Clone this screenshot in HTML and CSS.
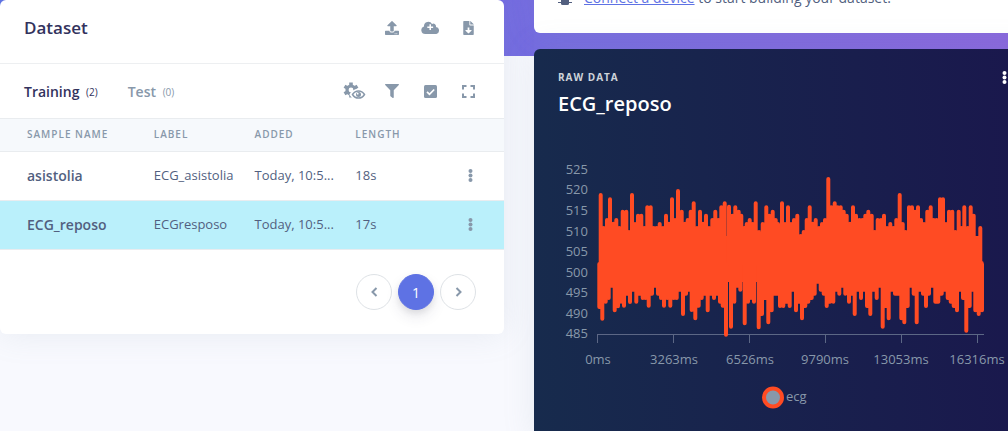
FILE: index.html
```html
<!DOCTYPE html>
<html lang="en">
<head>
<meta charset="utf-8">
<title>Dataset</title>
<link rel="stylesheet" href="styles.css">
</head>
<body>
<main class="page">
  <section class="card dataset">
    <header class="card-header">
      <h1 class="title">Dataset</h1>
      <div class="tools">
        <button class="tool" aria-label="Upload data"><svg width="14" height="14" viewBox="0 0 512 512"><path d="M296 384h-80c-13 0-24-11-24-24V192h-88c-18 0-27-21-14-34L242 6c8-8 20-8 28 0l152 152c13 13 4 34-14 34h-88v168c0 13-11 24-24 24zm216-8v112c0 13-11 24-24 24H24c-13 0-24-11-24-24V376c0-13 11-24 24-24h136v8c0 31 25 56 56 56h80c31 0 56-25 56-56v-8h136c13 0 24 11 24 24zm-124 88a20 20 0 1 0-40 0 20 20 0 0 0 40 0zm64 0a20 20 0 1 0-40 0 20 20 0 0 0 40 0z"/></svg></button>
        <button class="tool" aria-label="Import from cloud"><svg width="18" height="13" viewBox="0 0 640 480"><path fill-rule="evenodd" d="M538 225A96 96 0 0 0 395 114 160 160 0 0 0 96 192v8A144 144 0 0 0 144 480H512a128 128 0 0 0 26-255zM300 120h56v80h80v56h-80v80h-56v-80h-80v-56h80z"/></svg></button>
        <button class="tool" aria-label="Export data"><svg width="11" height="14" viewBox="0 0 384 512"><path fill-rule="evenodd" d="M224 136V0H24C11 0 0 11 0 24v464c0 13 11 24 24 24h336c13 0 24-11 24-24V160H248c-13 0-24-11-24-24zm77 217L204 449c-7 7-17 7-24 0l-97-96c-10-10-3-27 11-27h66v-86h64v86h66c14 0 21 17 11 27zM384 122v6H256V0h6l122 122z"/></svg></button>
      </div>
    </header>
    <nav class="tabs">
      <a class="tab tab-active" href="#training">Training <small>(2)</small></a>
      <a class="tab" href="#test">Test <small>(0)</small></a>
      <div class="tools">
        <button class="tool" aria-label="Toggle metadata"><svg width="24" height="20" viewBox="0 0 24 20"><circle cx="9" cy="9" r="4" fill="none" stroke="currentColor" stroke-width="3.200"/><path d="M9 1.500v3M9 13.500v3M2.500 5.250l2.600 1.500M12.900 6.750l2.600-1.500M2.500 12.750l2.600-1.500M12.900 11.250l2.600 1.500" fill="none" stroke="currentColor" stroke-width="3.600"/><path d="M9.500 13.500c3.500-5.500 10.500-5.500 14 0-3.500 5.500-10.500 5.500-14 0z" fill="#fff" stroke="#fff" stroke-width="3.500"/><path d="M10.500 13.500c3-4.800 9-4.800 12 0-3 4.800-9 4.800-12 0z" fill="#fff" stroke="currentColor" stroke-width="1.500"/><circle cx="16.500" cy="13.500" r="2.500"/><circle cx="15.700" cy="12.700" r=".9" fill="#fff"/></svg></button>
        <button class="tool" aria-label="Filter"><svg width="14" height="14" viewBox="0 0 512 512"><path d="M488 0H24C3 0-8 26 7 41l185 185v206c0 8 4 15 10 20l80 56c16 11 38 0 38-20V226L505 41c15-15 4-41-17-41z"/></svg></button>
        <button class="tool" aria-label="Select items"><svg width="13" height="13" viewBox="0 0 13 13"><rect width="13" height="13" rx="1.500"/><path d="M3 6.800l2.500 2.500 4.700-4.800" fill="none" stroke="#fff" stroke-width="1.700"/></svg></button>
        <button class="tool" aria-label="Expand"><svg width="13" height="13" viewBox="0 0 13 13"><path d="M1 4.500V1h3.500M8.500 1H12v3.500M12 8.500V12H8.500M4.500 12H1V8.500" fill="none" stroke="currentColor" stroke-width="2"/></svg></button>
      </div>
    </nav>
    <table class="samples">
      <colgroup><col class="c-name"><col class="c-label"><col class="c-added"><col class="c-length"><col class="c-menu"></colgroup>
      <thead><tr><th>Sample name</th><th>Label</th><th>Added</th><th>Length</th><th></th></tr></thead>
      <tbody>
        <tr><td class="name">asistolia</td><td>ECG_asistolia</td><td>Today, 10:5...</td><td>18s</td><td><button class="dots" aria-label="Sample menu"><svg width="5" height="13" viewBox="0 0 5 13"><circle cx="2.500" cy="2" r="2"/><circle cx="2.500" cy="6.500" r="2"/><circle cx="2.500" cy="11" r="2"/></svg></button></td></tr>
        <tr class="selected"><td class="name">ECG_reposo</td><td>ECGresposo</td><td>Today, 10:5...</td><td>17s</td><td><button class="dots" aria-label="Sample menu"><svg width="5" height="13" viewBox="0 0 5 13"><circle cx="2.500" cy="2" r="2"/><circle cx="2.500" cy="6.500" r="2"/><circle cx="2.500" cy="11" r="2"/></svg></button></td></tr>
      </tbody>
    </table>
    <footer class="pager">
      <button class="page-btn" aria-label="Previous"><svg width="7" height="10" viewBox="0 0 7 10"><path d="M5.500 1l-4 4 4 4" fill="none" stroke="currentColor" stroke-width="2"/></svg></button>
      <button class="page-btn page-current">1</button>
      <button class="page-btn" aria-label="Next"><svg width="7" height="10" viewBox="0 0 7 10"><path d="M1.500 1l4 4-4 4" fill="none" stroke="currentColor" stroke-width="2"/></svg></button>
    </footer>
  </section>

  <div class="side">
    <section class="card notice">
      <svg class="chip" width="14" height="14" viewBox="0 0 14 14"><rect x="3" y="0" width="8" height="14" rx="1.500"/><path d="M0 2.500h14M0 5.500h14M0 8.500h14M0 11.500h14" stroke="currentColor"/></svg>
      <p><a href="#devices">Connect a device</a> to start building your dataset.</p>
    </section>
    <section class="card raw">
      <header class="raw-header">
        <div>
          <h6 class="eyebrow">Raw data</h6>
          <h2 class="raw-title">ECG_reposo</h2>
        </div>
        <button class="dots dots-light" aria-label="Chart menu"><svg width="5" height="13" viewBox="0 0 5 13"><circle cx="2.500" cy="2" r="2"/><circle cx="2.500" cy="6.500" r="2"/><circle cx="2.500" cy="11" r="2"/></svg></button>
      </header>
      <svg class="chart" width="458" height="270" viewBox="550 150 458 270" role="img" aria-label="ECG signal">
        <g class="y-labels">
          <text x="588" y="174">525</text><text x="588" y="194">520</text><text x="588" y="215">515</text><text x="588" y="236">510</text><text x="588" y="256">505</text><text x="588" y="277">500</text><text x="588" y="297">495</text><text x="588" y="318">490</text><text x="588" y="338">485</text>
        </g>
        <path class="axis" d="M597 334.500H984M597.500 334V343M673.500 334V343M749.500 334V343M825.500 334V343M901.500 334V343M977.500 334V343"/>
        <rect class="signal-body" x="600" y="236" width="382" height="46"/>
        <path id="signal" class="signal"/>
        <g class="x-labels">
          <text x="598" y="364">0ms</text><text x="674" y="364">3263ms</text><text x="750" y="364">6526ms</text><text x="825" y="364">9790ms</text><text x="901" y="364">13053ms</text><text x="977" y="364">16316ms</text>
        </g>
        <circle class="legend-dot" cx="773" cy="397.500" r="9"/>
        <text class="legend" x="786" y="401">ecg</text>
      </svg>
    </section>
  </div>
</main>
<script src="chart.js"></script>
</body>
</html>
```
FILE: styles.css
```css
* { box-sizing: border-box; }

body {
  margin: 0;
  min-height: 100vh;
  overflow: hidden;
  background: linear-gradient(87deg, #5e72e4, #8965e0) top / 100% 56px no-repeat, #f8f9fe;
  color: #525f7f;
  font-family: "Open Sans", "Noto Sans", sans-serif;
  font-size: 13px;
}

h1, h2, h6, p { margin: 0; }

button {
  padding: 0;
  border: 0;
  background: none;
  color: #8898aa;
  font: inherit;
}

svg { display: block; fill: currentColor; }

.page {
  display: grid;
  grid-template-columns: 1fr 1fr;
  align-items: start;
  column-gap: 30px;
  width: calc(100% + 30px);
}

.card {
  background: #fff;
  border-radius: 6px;
  box-shadow: 0 0 32px rgba(136, 152, 170, .15);
}

.card-header {
  display: flex;
  align-items: center;
  justify-content: space-between;
  height: 64px;
  padding: 0 24px 8px;
  border-bottom: 1px solid #edeff1;
}

.title {
  color: #32325d;
  font-size: 17px;
  font-weight: 600;
}

.tools { display: flex; margin-left: auto; color: #8898aa; }

.tool {
  display: grid;
  place-items: center;
  width: 38px;
  height: 24px;
}

.card-header .tools, .tabs .tools { margin-right: -7px; }

.tabs {
  display: flex;
  align-items: center;
  gap: 30px;
  height: 54px;
  padding: 0 24px;
}

.tab {
  color: #8898aa;
  font-size: 14px;
  font-weight: 600;
  text-decoration: none;
}

.tab-active { color: #32325d; }

.tab small {
  margin-left: 3px;
  font-size: 10px;
  font-weight: 400;
  vertical-align: 1px;
}

.samples {
  width: 100%;
  table-layout: fixed;
  border-collapse: collapse;
}

.c-name { width: 30.500%; }
.c-label, .c-added, .c-length { width: 20%; }

.samples th, .samples td {
  padding: 0 0 2px;
  text-align: left;
  white-space: nowrap;
  border-top: 1px solid #e9ecef;
}

.samples th:first-child, .samples td:first-child { padding-left: 27px; }

.samples th {
  height: 33px;
  background: #f6f9fc;
  color: #8898aa;
  font-size: 10px;
  font-weight: 600;
  letter-spacing: 1px;
  text-transform: uppercase;
}

.samples td { height: 49px; }
.samples tbody tr:last-child td { border-bottom: 1px solid #e9ecef; }
.samples .name { font-size: 14px; font-weight: 600; }
.selected { background: #baf0fb; }

.dots { display: grid; place-items: center; width: 24px; height: 24px; margin-left: 2px; }

.pager {
  display: flex;
  justify-content: flex-end;
  gap: 6px;
  padding: 24px 28px;
}

.page-btn {
  display: grid;
  place-items: center;
  width: 36px;
  height: 36px;
  border: 1px solid #dee2e6;
  border-radius: 50%;
  font-size: 14px;
}

.page-current {
  border-color: #5e72e4;
  background: #5e72e4;
  color: #fff;
  box-shadow: 0 7px 14px rgba(50, 50, 93, .1), 0 3px 6px rgba(0, 0, 0, .08);
}

.side { display: grid; gap: 16px; }

.notice {
  display: flex;
  align-items: center;
  gap: 12px;
  margin-top: -36px;
  padding: 23px 24px 25px;
  font-size: 14px;
  line-height: 21px;
}

.notice a { color: #5e72e4; text-decoration: underline; }

.raw {
  padding: 20px 16px;
  background: linear-gradient(87deg, #172b4d, #1a174d);
}

.raw-header {
  display: flex;
  justify-content: space-between;
  padding: 0 8px;
}

.eyebrow {
  color: #ced4da;
  font-size: 10px;
  font-weight: 700;
  line-height: 16px;
  letter-spacing: 1px;
  text-transform: uppercase;
}

.raw-title {
  color: #fff;
  font-size: 20px;
  font-weight: 600;
  line-height: 38px;
}

.dots-light { margin-right: -2px; height: 16px; color: #fff; }

.chart { margin-top: 27px; overflow: visible; color: #8898aa; }
.y-labels { text-anchor: end; }
.x-labels { text-anchor: middle; }
.axis { fill: none; stroke: #5c6785; }
.signal { fill: none; stroke: #ff4b23; stroke-width: 4; stroke-linecap: round; }
.signal-body { fill: #ff4b23; }
.legend-dot { stroke: #ff4b23; stroke-width: 4; }
```
FILE: chart.js
```js
// Peaks and troughs of the signal: [origin, "offset:level ..."], three units per pixel.
const peaks = [
  [550, "152:129 161:228 171:204 180:142 190:215 199:204 208:228 218:179 229:179 237:240 246:129 255:216 264:191 274:191 283:228 292:166 302:166 311:228 320:228 329:216 339:228 348:191 357:215 366:142 375:204 384:117 395:179 405:215 413:204"],
  [690, "2:179 11:154 21:228 30:179 39:215 48:191 57:228 67:204 76:179 85:204 94:166 104:154 117:164 127:191 136:166 146:179 154:191 163:228 170:216 179:204 188:216 197:154 207:240 218:216 229:166 238:191 248:179 257:204 264:216 276:154 285:216 294:166 303:216 312:204 322:191 332:252 341:240 350:204 359:166 368:215 377:204 387:228 396:216 405:204 415:81 424:166 434:154 443:166 452:166 461:179 470:191"],
  [848, "6:215 15:166 24:191 34:204 43:204 52:191 61:179 71:191 80:240 89:204 99:204 108:191 117:228 127:216 136:228 145:204 155:129 164:216 173:240 183:166 192:166 201:179 210:166 219:204 228:216 238:179 248:166 257:204 266:204 276:142 285:142 294:216 303:179 313:179 322:240 332:179 340:228 349:166 359:228 368:166 377:191 387:264 397:228 401:333"]
];
const troughs = [
  [550, "148:477 157:512 167:461 176:450 185:413 194:487 204:475 213:461 222:473 232:437 240:462 250:425 259:461 268:437 278:450 287:450 296:473 306:437 315:413 324:437 333:450 342:473 352:450 361:473 371:450 380:450 389:425 399:498 408:437 417:425"],
  [690, "5:486 16:511 26:473 35:450 43:437 53:487 63:437 72:450 81:437 90:461 98:473 108:560 123:536 133:461 142:413 151:425 164:526 174:461 183:450 192:461 206:538 216:498 225:450 235:523 245:487 254:437 261:437 270:474 280:474 290:461 299:474 308:425 318:487 327:461 336:511 346:474 355:461 365:450 374:437 383:401 392:425 401:437 410:474 420:461 430:461 439:425 448:437 457:413 466:437"],
  [848, "3:461 11:437 20:498 30:425 39:450 48:425 57:474 67:498 76:425 86:450 95:413 104:536 113:474 122:511 132:425 141:437 150:437 160:511 169:523 179:474 188:413 197:437 206:523 215:425 225:437 234:474 243:437 252:413 262:461 271:461 281:437 290:425 299:450 308:461 317:474 327:487 336:425 345:450 355:548 365:474 374:425 382:487 392:498 402:487"]
];
const middle = 264;
const trace = (groups, inset) => groups.map(([origin, list]) =>
  list.split(" ").map(point => {
    const [x, y] = point.split(":").map(Number);
    return `M${(origin + x / 3).toFixed(1)} ${(150 + y / 3 + inset).toFixed(1)}V${middle}`;
  }).join("")).join("");
document.getElementById("signal").setAttribute("d", trace(peaks, 2) + trace(troughs, -2));
```
